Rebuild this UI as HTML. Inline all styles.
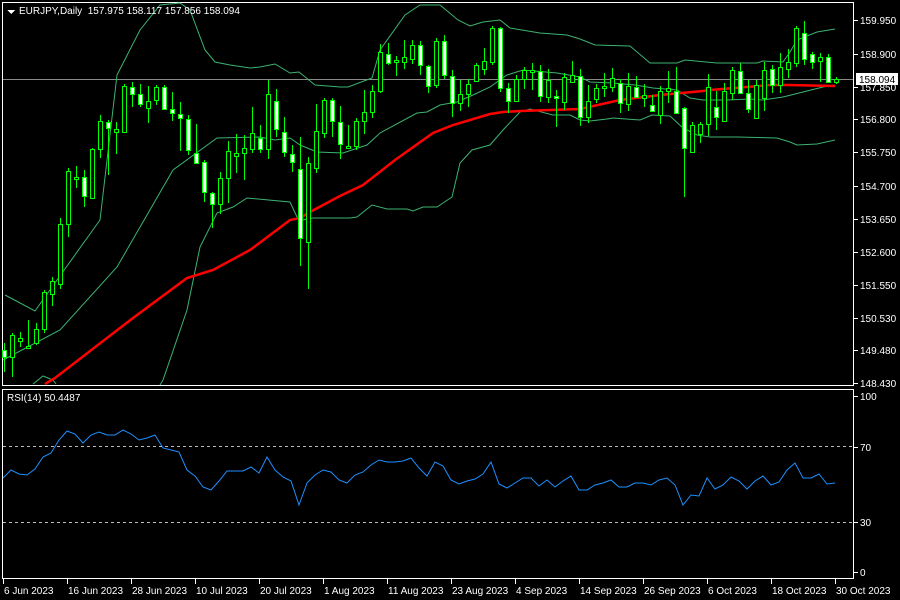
<!DOCTYPE html>
<html><head><meta charset="utf-8"><style>
html,body{margin:0;padding:0;background:#000;}
svg{display:block}
text{font-family:"Liberation Sans",sans-serif;font-size:10px;fill:#fff}
</style></head><body>
<svg id="s" width="900" height="600" viewBox="0 0 900 600" xmlns="http://www.w3.org/2000/svg" shape-rendering="crispEdges">
<rect width="900" height="600" fill="#000"/>
<rect x="2.5" y="2.5" width="851" height="383" fill="none" stroke="#fff"/>
<rect x="2.5" y="389.5" width="851" height="189" fill="none" stroke="#fff"/>
<line x1="3" y1="79.5" x2="853" y2="79.5" stroke="#8a8a8a"/>
<g id="bands" fill="none" stroke="#3cb371" stroke-width="1" shape-rendering="auto">
<polyline points="5,295 35,311 57,280 100,220 117,75 140,30 160,5 180,3 190,10 205,50 215,62 230,65 250,68 260,67 275,64 290,73 299,72 315,85 340,87 348,87 372,78 380,50 405,15 420,5 440,5 458,20 470,26 483,22 500,20 510,28 540,33 567,35 580,39 595,45 630,46 650,63 677,63 685,60 717,63 757,63 763,61 783,62 790,52 797,40 817,32 835,29"/>
<polyline points="3,360 60,330 117,267 173,170 217,138 260,137 275,140 290,138 300,145 317,152 343,153 367,145 380,133 417,113 427,112 440,105 457,102 473,95 490,87 507,75 523,70 557,73 580,77 590,82 613,83 635,85 653,88 677,90 690,98 703,100 727,100 750,99 763,100 783,97 803,92 823,87 835,85"/>
<polyline points="33,384 38,380 43,376 53,380 56,384"/>
<polyline points="160,385 163,380 187,310 200,247 217,213 233,207 247,198 290,202 297,217 303,220 313,218 350,218 357,217 372,205 387,209 407,209 413,211 423,207 437,207 452,197 460,163 472,150 490,145 503,130 520,112 530,109 553,115 570,115 580,120 590,121 607,119 613,118 640,120 652,115 670,116 683,128 697,135 710,137 737,137 777,138 790,142 797,145 817,144 835,140"/>
</g>
<polyline fill="none" stroke="#ff0000" stroke-width="2.5" shape-rendering="auto" points="45,384 55,378 133,318 187,278 213,270 250,250 290,220 300,218 310,212 340,196 363,185 395,160 433,133 453,125 490,114 503,112 520,111 580,109 620,100 660,95 703,91 710,90 770,85 788,85 835,86"/>
<g id="candles"></g>
<polyline id="rsi" fill="none" stroke="#1e90ff" stroke-width="1" shape-rendering="auto"/>
<line x1="3" y1="446.5" x2="853" y2="446.5" stroke="#bbb" stroke-dasharray="3,3"/>
<line x1="3" y1="522.5" x2="853" y2="522.5" stroke="#bbb" stroke-dasharray="3,3"/>
<rect x="856" y="73" width="42" height="12" fill="#fff"/>
<text x="859" y="83" style="fill:#000">158.094</text>
<polygon points="7,10 15,10 11,14" fill="#fff"/>
<text x="19" y="14">EURJPY,Daily&#160; 157.975 158.117 157.856 158.094</text>
<text x="7" y="401">RSI(14) 50.4487</text>
<g id="ax"></g>
</svg>
<script>
var NS="http://www.w3.org/2000/svg";
function el(t,a,p){var e=document.createElementNS(NS,t);for(var k in a)e.setAttribute(k,a[k]);(p||document.getElementById('s')).appendChild(e);return e;}
// [open,close,high,low]
var C=[[350,357,343,372],[357,335,333,377],[341,338,332,347],[346,346,320,347],[343,329,323,345],[329,292,290,333],[294,281,277,306],[284,224,218,289],[224,171,168,237],[177,177,166,188],[177,196,170,207],[198,149,148,198],[149,121,115,158],[122,128,120,175],[132,129,122,154],[132,86,84,132],[87,94,82,107],[94,104,84,107],[108,101,86,123],[100,87,85,105],[87,109,85,110],[109,113,92,121],[114,118,102,151],[119,150,115,155],[153,163,124,164],[162,192,160,202],[193,204,192,228],[204,178,172,214],[178,151,141,203],[156,153,134,173],[153,148,135,180],[149,133,107,153],[138,149,125,153],[149,94,80,159],[101,129,89,137],[132,152,117,157],[154,162,145,172],[169,238,137,266],[242,163,157,289],[168,131,104,173],[133,100,98,138],[100,121,98,137],[122,144,106,159],[148,146,125,148],[146,121,118,150],[121,112,90,134],[112,91,85,118],[91,52,44,93],[54,63,43,65],[62,60,56,76],[62,57,40,69],[59,45,40,64],[45,65,41,75],[66,86,65,93],[85,41,38,88],[41,75,35,79],[76,103,70,117],[103,94,80,111],[94,84,79,107],[81,65,63,82],[69,61,48,75],[62,28,26,65],[28,88,27,92],[88,101,83,113],[101,79,75,102],[79,70,67,89],[70,70,63,90],[71,96,65,102],[97,80,69,103],[96,98,90,127],[102,77,73,110],[82,75,61,83],[76,117,69,126],[117,101,85,123],[99,88,84,103],[88,86,73,97],[87,78,68,92],[83,103,79,113],[104,86,73,111],[87,97,76,97],[98,95,84,107],[105,111,95,111],[115,91,86,124],[91,88,71,103],[91,113,67,113],[108,148,107,197],[152,125,122,152],[134,124,122,143],[124,87,74,136],[107,117,91,130],[121,91,83,122],[93,70,67,100],[71,93,63,94],[93,109,80,113],[118,85,80,118],[98,70,62,111],[69,85,65,93],[85,67,53,93],[69,62,49,78],[63,28,26,67],[33,59,21,65],[54,62,52,69],[61,57,53,82],[57,82,54,83],[82,79,77,84]];
var g=document.getElementById('candles');
C.forEach(function(c,i){var x=4+8*i;var o=c[0],cl=c[1],h=c[2],l=c[3];
 el('line',{x1:x+.5,x2:x+.5,y1:h,y2:l,stroke:'#00ff00'},g);
 var t=Math.min(o,cl),b=Math.max(o,cl);if(b-t<2)b=t+2;
 el('rect',{x:x-2+.5,y:t+.5,width:4,height:b-t,fill:(cl>o?'#fff':'#000'),stroke:'#00ff00'},g);});
var R=[478,470,474,475,469,457,453,440,431,434,443,435,432,435,435,430,434,440,438,435,448,450,452,470,476,487,490,481,471,471,471,467,473,457,470,477,481,505,483,475,470,472,480,483,475,472,465,460,462,462,461,458,468,476,462,466,480,484,481,479,474,462,484,488,483,478,478,486,480,487,481,476,490,490,485,483,480,487,487,483,483,485,480,478,485,505,495,496,478,489,485,477,481,489,481,476,485,482,470,463,478,478,474,484,483];
document.getElementById('rsi').setAttribute('points',R.map(function(y,i){return (3+8*i)+','+y;}).join(' '));
var ax=document.getElementById('ax');
[['159.950',20],['158.900',54],['157.850',87],['156.800',119],['155.750',152],['154.700',186],['153.650',219],['152.600',252],['151.550',285],['150.530',318],['149.480',350],['148.430',383]].forEach(function(p){
 if(p[0]!=='157.850'){el('text',{x:860,y:p[1]+4},ax).textContent=p[0];}else{el('text',{x:860,y:p[1]+4},ax).textContent=p[0];}
 el('line',{x1:854,x2:858,y1:p[1]+.5,y2:p[1]+.5,stroke:'#fff'},ax);});
[['100',396],['70',447],['30',522],['0',572]].forEach(function(p){el('text',{x:860,y:p[1]+4},ax).textContent=p[0];el('line',{x1:854,x2:858,y1:p[1]+.5,y2:p[1]+.5,stroke:'#fff'},ax);});
[['6 Jun 2023',3],['16 Jun 2023',67],['28 Jun 2023',131],['10 Jul 2023',195],['20 Jul 2023',259],['1 Aug 2023',323],['11 Aug 2023',387],['23 Aug 2023',451],['4 Sep 2023',515],['14 Sep 2023',579],['26 Sep 2023',643],['6 Oct 2023',707],['18 Oct 2023',771],['30 Oct 2023',835]].forEach(function(p){
 el('line',{x1:p[1]+.5,x2:p[1]+.5,y1:579,y2:584,stroke:'#fff'},ax);
 el('text',{x:p[1]+1,y:594},ax).textContent=p[0];});
// redraw price label on top
var b=el('rect',{x:856,y:73,width:42,height:12,fill:'#fff'},ax);var t=el('text',{x:859,y:83,style:'fill:#000'},ax);t.textContent='158.094';
</script>
</body></html>
